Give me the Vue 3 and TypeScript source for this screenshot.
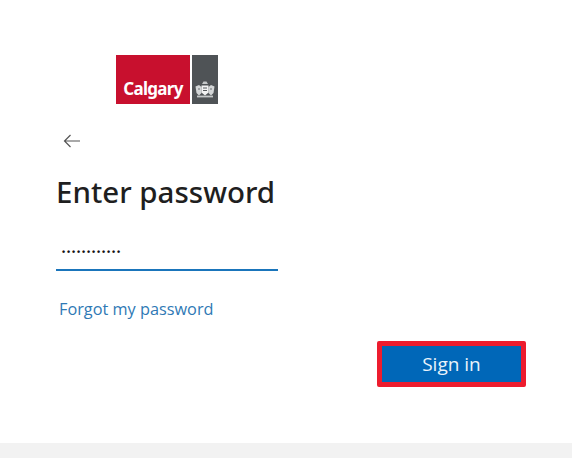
<script setup lang="ts">
import { ref } from 'vue';

const password = ref('••••••••••••');
</script>

<template>
  <div class="page">
    <main class="card">
      <div class="logo">
        <div class="logo-red"><span>Calgary</span></div>
        <div class="logo-grey">
          <!-- coat of arms, simplified -->
          <svg width="22" height="20" viewBox="0 0 22 20" fill="none">
            <path d="M1.500 6.500 5 5l2.500 2v6L5 15.500 2.500 13z" fill="#d3d6d7" />
            <path d="M20.500 6.500 17 5l-2.500 2v6l2.500 2.500 2.500-2.500z" fill="#d3d6d7" />
            <path d="M7.500 5.500h7v7L11 15.500l-3.500-3z" fill="#f1f2f2" />
            <path d="M8 4 9.500 1.500h3L14 4z" fill="#c4c7c8" />
            <path d="M3 16.500h16" stroke="#c4c7c8" stroke-width="1.800" />
            <path d="M9 8h4M9 10.500h4" stroke="#55595c" stroke-width="1" />
            <path d="M4 9h2M16 9h2" stroke="#6b6f72" stroke-width="1" />
          </svg>
        </div>
      </div>

      <button class="back" type="button" aria-label="Back">
        <svg width="18" height="14" viewBox="0 0 18 14" fill="none" stroke="#555" stroke-width="1.200">
          <path d="M17 7H1.500M7.500 1 1.500 7l6 6" />
        </svg>
      </button>

      <h1 class="title">Enter password</h1>

      <div class="field">{{ password }}</div>

      <a class="forgot" href="#">Forgot my password</a>

      <div class="actions">
        <button class="signin" type="button">Sign in</button>
      </div>
    </main>
    <footer class="footer"></footer>
  </div>
</template>

<style scoped>
.page {
  width: 572px;
  height: 458px;
  display: flex;
  flex-direction: column;
  background: #fff;
  font-family: "Open Sans", "Noto Sans", sans-serif;
  overflow: hidden;
}

.card {
  flex: 1;
  display: flex;
  flex-direction: column;
  align-items: flex-start;
  padding: 55px 46px 0 56px;
}

.logo {
  display: flex;
  gap: 2px;
  height: 49px;
  margin-left: 60px;
}

.logo-red {
  width: 74px;
  background: #c8102e;
  display: flex;
  align-items: flex-end;
  justify-content: center;
  padding-bottom: 5px;
  box-sizing: border-box;
}

.logo-red span {
  color: #fff;
  font-family: "Noto Sans", sans-serif;
  font-weight: 700;
  font-size: 17px;
  line-height: 20px;
  letter-spacing: -0.7px;
}

.logo-grey {
  width: 26px;
  background: #4f5356;
  display: flex;
  align-items: flex-end;
  justify-content: center;
  padding-bottom: 4px;
  box-sizing: border-box;
}

.back {
  border: 0;
  background: none;
  padding: 0;
  margin: 30px 0 0 7px;
  height: 14px;
  display: flex;
}

.title {
  margin: 24px 0 0 0;
  font-family: "Noto Sans", sans-serif;
  font-size: 29.5px;
  line-height: 40px;
  font-weight: 500;
  color: #1f1f1f;
  white-space: nowrap;
}

.field {
  width: 222px;
  height: 38px;
  margin-top: 21px;
  box-sizing: border-box;
  border-bottom: 2px solid #1a75bb;
  padding: 9px 0 0 6px;
  font-family: "Liberation Sans", sans-serif;
  font-size: 9px;
  font-weight: 700;
  line-height: 20px;
  letter-spacing: 1.85px;
  color: #111;
}

.forgot {
  margin: 26px 0 0 3px;
  font-size: 16.3px;
  line-height: 24px;
  color: #2f79b5;
  text-decoration: none;
  white-space: nowrap;
}

.actions {
  align-self: stretch;
  display: flex;
  justify-content: flex-end;
  margin-top: 20px;
}

.signin {
  width: 149px;
  height: 46px;
  box-sizing: border-box;
  background: #0067b8;
  border: 5px solid #ed1c2e;
  border-radius: 2px;
  color: #eaf3fb;
  font-family: inherit;
  font-size: 19px;
  padding: 0;
}

.footer {
  height: 15px;
  background: #f2f2f2;
}
</style>

<style>
html, body { margin: 0; background: #fff; }
</style>
